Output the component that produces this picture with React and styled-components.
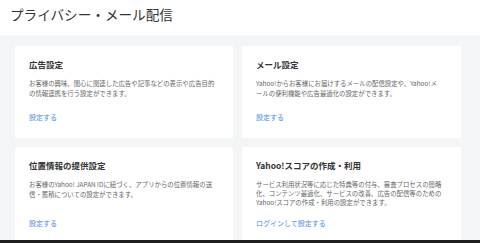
import React from 'react';
import styled, { createGlobalStyle } from 'styled-components';

const GlobalStyle = createGlobalStyle`
  html, body {
    margin: 0;
    padding: 0;
    background: #f4f5f7;
  }
  body {
    font-family: 'Noto Sans CJK JP', 'Noto Sans', sans-serif;
    color: #333;
  }
`;

const Page = styled.div`
  display: flex;
  flex-direction: column;
  width: 480px;
  height: 243px;
  overflow: hidden;
`;

const Header = styled.header`
  display: flex;
  align-items: center;
  height: 35px;
  padding: 0 0 8px 10px;
  box-sizing: border-box;
  background: #fff;
`;

const PageTitle = styled.h1`
  margin: 0;
  font-size: 13.6px;
  font-weight: 400;
  line-height: 18px;
  color: #333;
`;

const Main = styled.main`
  flex: 1;
  overflow: hidden;
  padding: 11px 19px 0 15px;
  background: #f4f5f7;
`;

const Grid = styled.div`
  display: grid;
  grid-template-columns: 218px 219px;
  column-gap: 9px;
  row-gap: 9px;
`;

const Card = styled.section`
  display: flex;
  flex-direction: column;
  min-height: 92px;
  padding: 12px 14px 16px;
  box-sizing: border-box;
  background: #fff;
`;

const CardTitle = styled.h2`
  margin: 0 0 9px;
  font-size: 8.5px;
  font-weight: 700;
  line-height: 12px;
  color: #333;
`;

const Desc = styled.p`
  margin: 0 0 10px;
  font-size: 6.4px;
  line-height: ${(props) => props.lh || 9.6}px;
  color: #666;
  white-space: nowrap;
`;

const Link = styled.a`
  margin-top: auto;
  font-size: 7px;
  line-height: 10px;
  color: #4d8de0;
  text-decoration: none;
`;

const BottomBar = styled.div`
  height: 3px;
  background: #1e1e1e;
`;

const cards = [
  {
    title: '広告設定',
    lines: [
      'お客様の興味、関心に関連した広告や記事などの表示や広告目的',
      'の情報連携を行う設定ができます。',
    ],
    link: '設定する',
  },
  {
    title: 'メール設定',
    lines: [
      'Yahoo!からお客様にお届けするメールの配信設定や、Yahoo!メ',
      'ールの便利機能や広告最適化の設定ができます。',
    ],
    link: '設定する',
  },
  {
    title: '位置情報の提供設定',
    lines: [
      'お客様のYahoo! JAPAN IDに紐づく、アプリからの位置情報の送',
      '信・蓄積についての設定ができます。',
    ],
    link: '設定する',
  },
  {
    title: 'Yahoo!スコアの作成・利用',
    lines: [
      'サービス利用状況等に応じた特典等の付与、審査プロセスの簡略',
      '化、コンテンツ最適化、サービスの改善、広告の配信等のための',
      'Yahoo!スコアの作成・利用の設定ができます。',
    ],
    lh: 9.2,
    link: 'ログインして設定する',
  },
];

export default function App() {
  return (
    <Page>
      <GlobalStyle />
      <Header>
        <PageTitle>プライバシー・メール配信</PageTitle>
      </Header>
      <Main>
        <Grid>
          {cards.map((c) => (
            <Card key={c.title}>
              <CardTitle>{c.title}</CardTitle>
              <Desc lh={c.lh}>
                {c.lines.map((l, i) => (
                  <React.Fragment key={l}>
                    {i > 0 && <br />}
                    {l}
                  </React.Fragment>
                ))}
              </Desc>
              <Link href="#">{c.link}</Link>
            </Card>
          ))}
        </Grid>
      </Main>
      <BottomBar />
    </Page>
  );
}
